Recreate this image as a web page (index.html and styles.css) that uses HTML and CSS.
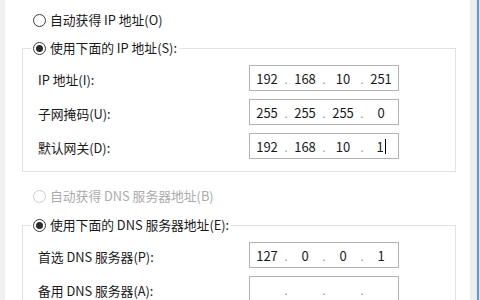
FILE: index.html
```html
<!DOCTYPE html>
<html lang="zh-CN">
<head>
<meta charset="utf-8">
<title>IP 设置</title>
<link rel="stylesheet" href="styles.css">
</head>
<body>
<div class="window">
  <div class="frame-left"></div>
  <main class="content">
    <div class="radio-row">
      <span class="radio"></span><span class="radio-label">自动获得 IP 地址(O)</span>
    </div>
    <fieldset class="group">
      <legend class="legend">
        <span class="radio checked"></span><span class="radio-label">使用下面的 IP 地址(S):</span>
      </legend>
      <div class="rows">
        <span class="label">IP 地址(I):</span>
        <div class="ipbox"><span class="oct">192</span><span class="dot">.</span><span class="oct">168</span><span class="dot">.</span><span class="oct">10</span><span class="dot">.</span><span class="oct">251</span></div>
        <span class="label">子网掩码(U):</span>
        <div class="ipbox"><span class="oct">255</span><span class="dot">.</span><span class="oct">255</span><span class="dot">.</span><span class="oct">255</span><span class="dot">.</span><span class="oct">0</span></div>
        <span class="label">默认网关(D):</span>
        <div class="ipbox"><span class="oct">192</span><span class="dot">.</span><span class="oct">168</span><span class="dot">.</span><span class="oct">10</span><span class="dot">.</span><span class="oct">1<span class="caret"></span></span></div>
      </div>
    </fieldset>
    <div class="radio-row disabled">
      <span class="radio"></span><span class="radio-label">自动获得 DNS 服务器地址(B)</span>
    </div>
    <fieldset class="group group-dns">
      <legend class="legend">
        <span class="radio checked"></span><span class="radio-label">使用下面的 DNS 服务器地址(E):</span>
      </legend>
      <div class="rows">
        <span class="label">首选 DNS 服务器(P):</span>
        <div class="ipbox"><span class="oct">127</span><span class="dot">.</span><span class="oct">0</span><span class="dot">.</span><span class="oct">0</span><span class="dot">.</span><span class="oct">1</span></div>
        <span class="label">备用 DNS 服务器(A):</span>
        <div class="ipbox"><span class="oct"></span><span class="dot">.</span><span class="oct"></span><span class="dot">.</span><span class="oct"></span><span class="dot">.</span><span class="oct"></span></div>
      </div>
    </fieldset>
  </main>
  <div class="frame-right"></div>
  <div class="frame-blue"></div>
  <div class="frame-edge"></div>
</div>
</body>
</html>
```

FILE: styles.css
```css
* { box-sizing: border-box; }
html, body { margin: 0; padding: 0; background: #ffffff; }
body {
  font-family: "Noto Sans CJK SC", "Noto Sans", sans-serif;
  font-size: 12.8px;
  color: #1a1a1a;
}
.window {
  width: 480px;
  height: 300px;
  overflow: hidden;
  display: flex;
}
.frame-left { width: 5px; background: #f0f0f0; flex: none; }
.frame-right { width: 7px; background: #efefef; border-right: 1px solid #e4e4e4; flex: none; }
.frame-blue { width: 2px; background: #5e9bd8; flex: none; }
.frame-edge { width: 1px; background: #dfe9f5; flex: none; }
.content {
  flex: 1;
  padding: 11px 0 0 28px;
  min-width: 0;
}
.radio-row {
  display: flex;
  align-items: center;
  height: 18px;
}
.radio {
  width: 13px;
  height: 13px;
  border: 1px solid #3a3a3a;
  border-radius: 50%;
  background: #fff;
  flex: none;
  display: inline-flex;
  align-items: center;
  justify-content: center;
  margin-top: 1px;
}
.radio.checked::after {
  content: "";
  width: 7px;
  height: 7px;
  border-radius: 50%;
  background: #2b2b2b;
}
.radio-label { margin-left: 4px; line-height: 18px; }
.disabled { color: #ababab; }
.disabled .radio { border-color: #cccccc; }
.radio-row.disabled { margin-top: 15px; }
.group {
  margin: 10px 14px 0 -11px;
  padding: 0;
  border: 1px solid #e2e2e2;
  min-width: 0;
}
.group-dns { margin-top: 11px; }
.legend {
  margin-left: 8px;
  padding: 0 2px;
  display: flex;
  align-items: center;
  height: 18px;
  background: #fff;
}
.rows {
  display: grid;
  grid-template-columns: 211px 150px;
  grid-auto-rows: 26px;
  row-gap: 8px;
  padding: 8px 0 12px 15px;
  align-items: center;
}
.label { padding-top: 3px; }
.ipbox {
  height: 26px;
  border: 1px solid #b2b2b2;
  display: flex;
  align-items: center;
  font-size: 13px;
  color: #1a1a1a;
}
.oct {
  flex: 1;
  text-align: center;
  display: flex;
  justify-content: center;
  align-items: center;
}
.dot {
  width: 4px;
  text-align: center;
  color: #8a8a8a;
  font-size: 11px;
  padding-top: 2px;
}
.caret {
  display: inline-block;
  width: 1px;
  height: 15px;
  background: #000;
  margin-left: 1px;
}
```
